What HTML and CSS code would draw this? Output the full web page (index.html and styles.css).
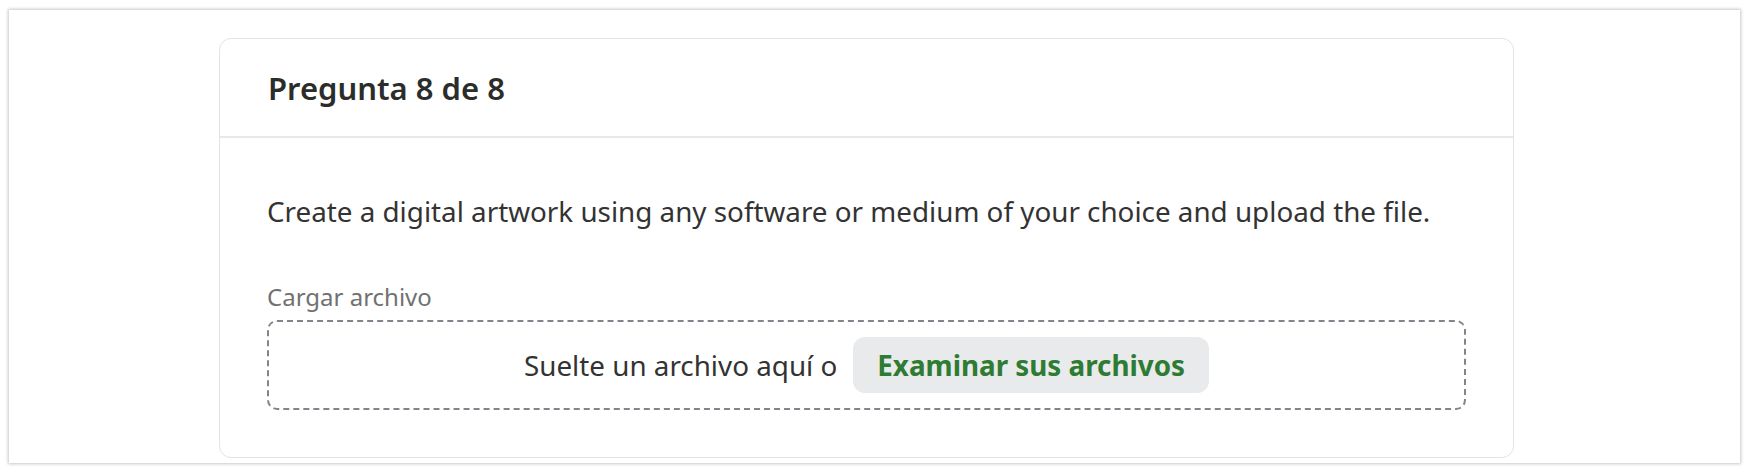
FILE: index.html
```html
<!DOCTYPE html>
<html lang="es">
<head>
<meta charset="utf-8">
<title>Pregunta 8 de 8</title>
<link rel="stylesheet" href="styles.css">
</head>
<body>
<div class="window">
  <section class="card">
    <header class="card-header">
      <h2 class="card-title">Pregunta 8 de 8</h2>
    </header>
    <div class="card-body">
      <p class="question">Create a digital artwork using any software or medium of your choice and upload the file.</p>
      <div class="upload">
        <div class="upload-label">Cargar archivo</div>
        <div class="dropzone">
          <span class="drop-text">Suelte un archivo aquí o</span>
          <button class="browse" type="button">Examinar sus archivos</button>
        </div>
      </div>
    </div>
  </section>
</div>
</body>
</html>
```

FILE: styles.css
```css
* { box-sizing: border-box; }

html, body {
  margin: 0;
  background: #ffffff;
}

body {
  padding: 10px 16px 11px 9px;
  font-family: "Noto Sans", "Open Sans", sans-serif;
  color: #2f2f2f;
}

.window {
  height: 453px;
  background: #ffffff;
  box-shadow: 0 0 3px 1px rgba(0, 0, 0, 0.22);
  padding-top: 28px;
  padding-left: 210px;
}

.card {
  width: 1295px;
  height: 420px;
  border: 1px solid #e4e4e4;
  border-radius: 12px;
  background: #fff;
}

.card-header {
  height: 99px;
  border-bottom: 2px solid #e8e8e8;
  display: flex;
  align-items: center;
  padding: 0 48px;
}

.card-title {
  margin: 0;
  font-size: 31px;
  line-height: 40px;
  font-weight: 600;
  color: #2b2d2b;
}

.card-body {
  padding: 54px 47px 0;
}

.question {
  margin: 0;
  font-size: 27.8px;
  line-height: 38px;
  color: #333333;
}

.upload {
  margin-top: 51px;
}

.upload-label {
  font-size: 24px;
  line-height: 32px;
  color: #717171;
  margin-bottom: 7px;
}

.dropzone {
  height: 90px;
  border: 2px dashed #80848c;
  border-radius: 10px;
  display: flex;
  align-items: center;
  justify-content: center;
  gap: 16px;
}

.drop-text {
  font-size: 27.8px;
  color: #333333;
}

.browse {
  font-family: inherit;
  height: 56px;
  padding: 0 24px;
  border: none;
  border-radius: 12px;
  background: #e9eaec;
  color: #2e7b32;
  font-size: 27.8px;
  font-weight: 700;
  cursor: pointer;
}
```
